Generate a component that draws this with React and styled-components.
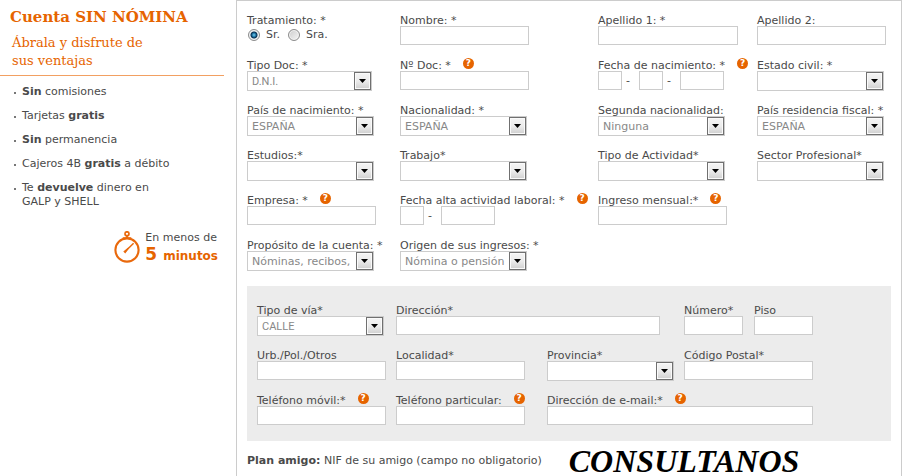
import React from "react";
import styled, { createGlobalStyle } from "styled-components";

const GlobalStyle = createGlobalStyle`
  *, *::before, *::after { box-sizing: border-box; }
  body {
    margin: 0;
    background: #fff;
    color: #4a4a4a;
    font: 11px/14px "DejaVu Sans", Verdana, sans-serif;
  }
`;

const Page = styled.div`
  display: flex;
  align-items: stretch;
  gap: 12px;
  min-height: 100vh;
  padding-right: 4px;
`;

const Sidebar = styled.aside`
  flex: 0 0 224px;
`;

const Intro = styled.header`
  padding: 6px 0 5px 10px;
  border-bottom: 1px solid #f2a062;
  color: #e66400;
  font-family: "DejaVu Serif", Rockwell, serif;
  white-space: nowrap;
`;

const Title = styled.h1`
  margin: 0 0 5px;
  font-size: 15px;
  line-height: 23px;
  font-weight: 700;
`;

const Subtitle = styled.p`
  margin: 0;
  padding-left: 2px;
  font-size: 13px;
  line-height: 18px;
`;

const Benefits = styled.ul`
  display: flex;
  flex-direction: column;
  gap: 10px;
  margin: 0;
  padding: 9px 10px 0 14px;
  list-style: none;
`;

const Benefit = styled.li`
  display: flex;
  gap: 6px;
  &::before {
    content: "";
    flex: none;
    width: 2px;
    height: 2px;
    margin-top: 7px;
    background: #777;
  }
`;

const Promo = styled.div`
  display: flex;
  justify-content: flex-end;
  gap: 5px;
  padding: 22px 6px 0 0;
`;

const PromoText = styled.p`
  margin: 0;
  white-space: nowrap;
`;

const Minutes = styled.strong`
  display: flex;
  align-items: baseline;
  gap: 6px;
  color: #e66400;
  font-size: 12px;
  line-height: 18px;
`;

const Five = styled.span`
  font-size: 17px;
`;

const Panel = styled.form`
  flex: 1;
  min-width: 0;
  padding: 12px 10px 0;
  border: 1px solid #ccc;
  border-bottom: 0;
`;

const PersonalGrid = styled.div`
  display: grid;
  grid-template-columns: minmax(0, 153fr) minmax(0, 198fr) minmax(0, 159fr) minmax(0, 134fr);
  grid-auto-rows: 45px;
`;

const AddressGrid = styled.div`
  display: grid;
  grid-template-columns:
    minmax(0, 139fr) minmax(0, 151fr) minmax(0, 137fr) minmax(0, 70fr) minmax(0, 127fr);
  grid-auto-rows: 45px;
  margin-top: 3px;
  padding: 17px 10px 3px;
  background: #ececec;
`;

const FieldBox = styled.div`
  grid-column: span ${(p) => p.$span || 1};
`;

const Caption = styled.div`
  display: flex;
  align-items: flex-start;
  gap: 12px;
  height: 13px;
  line-height: 16px;
  white-space: nowrap;
`;

const Help = styled.button`
  flex: none;
  width: 11px;
  height: 11px;
  padding: 0;
  border: 0;
  border-radius: 50%;
  background: #e66400;
  color: #fff;
  font: 700 9px/11px "DejaVu Sans", sans-serif;
  text-align: center;
`;

const TextInput = styled.input`
  display: block;
  width: ${(p) => p.$width}px;
  max-width: 100%;
  height: 19px;
  padding: 0 4px;
  border: 1px solid #ccc;
  border-radius: 0;
  background: #fff;
  color: #888;
  font: inherit;
`;

const SelectBox = styled.div`
  position: relative;
  width: ${(p) => p.$width}px;
  max-width: 100%;
  height: 20px;
`;

const SelectControl = styled.select`
  appearance: none;
  display: block;
  width: 100%;
  height: 20px;
  padding: 0 18px 0 4px;
  border: 1px solid #ccc;
  border-radius: 0;
  background: #fff;
  color: #888;
  font: ${(p) => (p.$compact ? '11px Roboto, sans-serif' : '11px "DejaVu Sans", sans-serif')};
`;

const Arrow = styled.span`
  position: absolute;
  top: 1px;
  right: 1px;
  display: flex;
  align-items: center;
  justify-content: center;
  width: 17px;
  height: 18px;
  border: 1px solid #707070;
  background: linear-gradient(#f4f4f4, #ececec 50%, #cfcfcf);
  box-shadow: inset 0 0 0 1px #fafafa;
  pointer-events: none;
`;

const DateParts = styled.div`
  display: flex;
`;

const Dash = styled.span`
  width: 17px;
  padding-left: 4px;
  line-height: 19px;
`;

const RadioGroup = styled.fieldset`
  min-width: 0;
  margin: 0;
  padding: 0;
  border: 0;
`;

const Legend = styled.legend`
  height: 13px;
  padding: 0;
  line-height: 16px;
`;

const RadioRow = styled.div`
  display: flex;
  gap: 8px;
  padding: 2px 0 0 1px;
`;

const RadioLabel = styled.label`
  display: flex;
  align-items: center;
  gap: 6px;
`;

const Radio = styled.input`
  appearance: none;
  width: 12px;
  height: 12px;
  margin: 0;
  border: 1px solid #8c8c8c;
  border-radius: 50%;
  background: linear-gradient(135deg, #ccc, #f6f6f6);
  box-shadow: inset 0 0 0 1px #f4f4f4;
  &:checked {
    background: radial-gradient(circle at 5px 5px, #7ad0f0 0, #146a9c 2px, #0b2e4d 3px, #dfe7ec 4px);
  }
`;

const Friend = styled.div`
  display: flex;
  align-items: center;
  gap: 27px;
  margin-top: 6px;
  white-space: nowrap;
`;

const Consult = styled.strong`
  color: #000;
  font: italic 700 32px/28px "Liberation Serif", "Times New Roman", serif;
`;

function Stopwatch() {
  return (
    <svg width="26" height="32" viewBox="0 0 26 32" fill="none" stroke="#e9690c" aria-hidden="true">
      <circle cx="13" cy="19" r="11.6" strokeWidth="2.1" />
      <circle cx="13" cy="2.8" r="2" strokeWidth="1.7" />
      <path d="M13 4.8v3M8.7 7.2h8.6" strokeWidth="1.8" />
      <path d="M19.6 12.2l-8.2 8" strokeWidth="1.5" />
      <path d="M14.6 17l-4.4 3.5 1 1z" fill="#e9690c" strokeWidth="1.2" />
    </svg>
  );
}

function Field({ id, label, help, span, children }) {
  return (
    <FieldBox $span={span}>
      <Caption>
        <label htmlFor={id}>{label}</label>
        {help && <Help type="button" aria-label={`Ayuda: ${label}`}>?</Help>}
      </Caption>
      {children}
    </FieldBox>
  );
}

function TextField({ id, width = 129, ...rest }) {
  return (
    <Field id={id} {...rest}>
      <TextInput id={id} name={id} type="text" $width={width} />
    </Field>
  );
}

function SelectField({ id, value = "", width = 127, compact, ...rest }) {
  return (
    <Field id={id} {...rest}>
      <SelectBox $width={width}>
        <SelectControl id={id} name={id} $compact={compact} defaultValue={value}>
          <option value={value}>{value}</option>
        </SelectControl>
        <Arrow>
          <svg width="7" height="4" viewBox="0 0 7 4" aria-hidden="true">
            <path d="M0 0h7L3.5 4z" fill="#000" />
          </svg>
        </Arrow>
      </SelectBox>
    </Field>
  );
}

function DateField({ id, parts, ...rest }) {
  return (
    <Field id={id} {...rest}>
      <DateParts>
        {parts.map(([name, width], i) => (
          <React.Fragment key={name}>
            {i > 0 && <Dash>-</Dash>}
            <TextInput
              id={i === 0 ? id : `${id}-${name}`}
              type="text"
              aria-label={i === 0 ? undefined : `${rest.label} ${name}`}
              $width={width}
            />
          </React.Fragment>
        ))}
      </DateParts>
    </Field>
  );
}

export default function App() {
  return (
    <>
      <GlobalStyle />
      <Page>
        <Sidebar>
          <Intro>
            <Title>Cuenta SIN NÓMINA</Title>
            <Subtitle>
              Ábrala y disfrute de
              <br />
              sus ventajas
            </Subtitle>
          </Intro>
          <Benefits>
            <Benefit><span><b>Sin</b> comisiones</span></Benefit>
            <Benefit><span>Tarjetas <b>gratis</b></span></Benefit>
            <Benefit><span><b>Sin</b> permanencia</span></Benefit>
            <Benefit><span>Cajeros 4B <b>gratis</b> a débito</span></Benefit>
            <Benefit><span>Te <b>devuelve</b> dinero en<br />GALP y SHELL</span></Benefit>
          </Benefits>
          <Promo>
            <Stopwatch />
            <PromoText>
              En menos de
              <Minutes><Five>5</Five> minutos</Minutes>
            </PromoText>
          </Promo>
        </Sidebar>

        <Panel>
          <PersonalGrid>
            <RadioGroup>
              <Legend>Tratamiento: *</Legend>
              <RadioRow>
                <RadioLabel><Radio type="radio" name="tratamiento" value="sr" defaultChecked />Sr.</RadioLabel>
                <RadioLabel><Radio type="radio" name="tratamiento" value="sra" />Sra.</RadioLabel>
              </RadioRow>
            </RadioGroup>
            <TextField id="nombre" label="Nombre: *" />
            <TextField id="apellido1" label="Apellido 1: *" width={140} />
            <TextField id="apellido2" label="Apellido 2:" />

            <SelectField id="tipo-doc" label="Tipo Doc: *" value="D.N.I." width={125} compact />
            <TextField id="num-doc" label="Nº Doc: *" help />
            <DateField
              id="nacimiento"
              label="Fecha de nacimiento: *"
              help
              parts={[["día", 24], ["mes", 24], ["año", 44]]}
            />
            <SelectField id="estado-civil" label="Estado civil: *" />

            <SelectField id="pais-nacimiento" label="País de nacimiento: *" value="ESPAÑA" />
            <SelectField id="nacionalidad" label="Nacionalidad: *" value="ESPAÑA" />
            <SelectField id="segunda-nacionalidad" label="Segunda nacionalidad:" value="Ninguna" />
            <SelectField id="pais-residencia" label="País residencia fiscal: *" value="ESPAÑA" />

            <SelectField id="estudios" label="Estudios:*" />
            <SelectField id="trabajo" label="Trabajo*" />
            <SelectField id="actividad" label="Tipo de Actividad*" />
            <SelectField id="sector" label="Sector Profesional*" />

            <TextField id="empresa" label="Empresa: *" help />
            <DateField
              id="alta"
              label="Fecha alta actividad laboral: *"
              help
              parts={[["mes", 24], ["año", 54]]}
            />
            <TextField id="ingreso" label="Ingreso mensual:*" help span={2} />

            <SelectField id="proposito" label="Propósito de la cuenta: *" value="Nóminas, recibos," />
            <SelectField id="origen" label="Origen de sus ingresos: *" value="Nómina o pensión" />
          </PersonalGrid>

          <AddressGrid>
            <SelectField id="tipo-via" label="Tipo de vía*" value="CALLE" compact />
            <TextField id="direccion" label="Dirección*" width={264} span={2} />
            <TextField id="numero" label="Número*" width={59} />
            <TextField id="piso" label="Piso" width={59} />

            <TextField id="urbanizacion" label="Urb./Pol./Otros" />
            <TextField id="localidad" label="Localidad*" />
            <SelectField id="provincia" label="Provincia*" />
            <TextField id="codigo-postal" label="Código Postal*" span={2} />

            <TextField id="movil" label="Teléfono móvil:*" help />
            <TextField id="telefono" label="Teléfono particular:" help />
            <TextField id="email" label="Dirección de e-mail:*" width={266} help span={3} />
          </AddressGrid>

          <Friend>
            <span><b>Plan amigo:</b> NIF de su amigo (campo no obligatorio)</span>
            <Consult>CONSULTANOS</Consult>
          </Friend>
        </Panel>
      </Page>
    </>
  );
}
